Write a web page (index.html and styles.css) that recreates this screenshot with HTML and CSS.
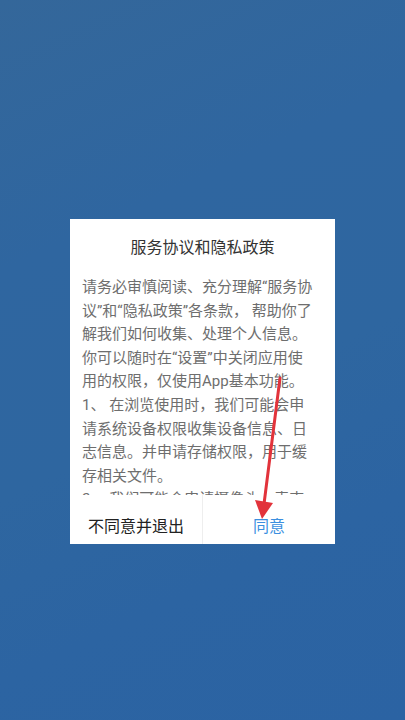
FILE: index.html
```html
<!DOCTYPE html>
<html>
<head>
    <meta charset="utf-8">
    <title>服务协议和隐私政策</title>
    <link rel="stylesheet" href="styles.css">
</head>
<body>

    <div class="screen">
        <div class="dialog">
            <div class="dialog-title">服务协议和隐私政策</div>
            <div class="dialog-body">
                <p>请务必审慎阅读、充分理解“服务协<br>议”和“隐私政策”各条款， 帮助你了<br>解我们如何收集、处理个人信息。<br>你可以随时在“设置”中关闭应用使<br>用的权限，仅使用App基本功能。</p>
                <p>1、 在浏览使用时，我们可能会申<br>请系统设备权限收集设备信息、日<br>志信息。并申请存储权限，用于缓<br>存相关文件。</p>
                <p>2、 我们可能会申请摄像头、麦克<br>风权限，用于拍照和录音。</p>
            </div>
            <div class="dialog-buttons">
                <button class="btn btn-cancel">不同意并退出</button>
                <button class="btn btn-ok">同意</button>
            </div>
        </div>

        <svg class="arrow" width="405" height="720" viewBox="0 0 405 720">
            <line x1="280" y1="378" x2="264" y2="504" stroke="#e2333b" stroke-width="3" stroke-linecap="round"/>
            <polygon points="262,519 255,500 273,503" fill="#e2333b"/>
        </svg>
    </div>

</body>
</html>
```

FILE: styles.css
```css
html, body {
    margin: 0;
    padding: 0;
}

body {
    font-family: Roboto, "Noto Sans CJK SC", sans-serif;
}

.screen {
    position: relative;
    width: 405px;
    height: 720px;
    box-sizing: border-box;
    padding-top: 219px;
    overflow: hidden;
    background: linear-gradient(155deg, #34679a 0%, #2f66a0 30%, #2e66a0 55%, #2c64a2 75%, #2b63a3 100%);
}

.dialog {
    width: 265px;
    height: 325px;
    margin: 0 auto;
    background-color: white;
    display: flex;
    flex-direction: column;
}

.dialog-title {
    padding-top: 18px;
    text-align: center;
    font-size: 16px;
    line-height: 22px;
    color: #333;
}

.dialog-body {
    flex: 1;
    margin-top: 17px;
    padding: 0 12px;
    overflow: hidden;
    font-size: 15px;
    line-height: 23.6px;
    color: #6e6e6e;
    white-space: nowrap;
}

.dialog-body p {
    margin: 0;
}

.dialog-buttons {
    display: flex;
    height: 49px;
}

.btn {
    flex: 1;
    border: none;
    background: white;
    font-family: inherit;
    font-size: 16px;
    padding: 10px 0 0;
    cursor: pointer;
}

.btn-cancel {
    color: #222;
    border-right: 1px solid #eeeeee;
}

.btn-ok {
    color: #3b8fdf;
}

.arrow {
    position: absolute;
    left: 0;
    top: 0;
    pointer-events: none;
}
```
